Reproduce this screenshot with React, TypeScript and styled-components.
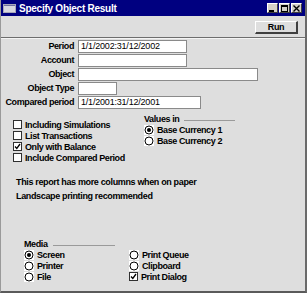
import React from "react";
import styled, { createGlobalStyle } from "styled-components";

const Global = createGlobalStyle`
  html, body { margin: 0; padding: 0; background: #dedede; }
  body { font-family: "Liberation Sans", Arial, sans-serif; }
`;

const Window = styled.div`
  width: 307px;
  height: 293px;
  box-sizing: border-box;
  background: #dedede;
  border-left: 1px solid #9a9a9a;
  border-right: 2px solid #6a6a6a;
  border-bottom: 2px solid #5a5a5a;
  display: flex;
  flex-direction: column;
  font-family: "Liberation Sans", Arial, sans-serif;
  font-weight: bold;
  font-size: 9px;
  letter-spacing: -0.4px;
  color: #000;
  overflow: hidden;
`;

const TitleBar = styled.div`
  height: 16px;
  background: #000080;
  display: flex;
  align-items: center;
  padding: 0 3px 0 2px;
  box-sizing: border-box;
`;

const TitleText = styled.span`
  color: #fff;
  font-size: 10px;
  margin-left: 3px;
  flex: 1;
  letter-spacing: -0.25px;
`;

const TitleButtons = styled.div`
  display: flex;
  gap: 1px;
`;

const TitleButton = styled.div`
  width: 11px;
  height: 10px;
  box-sizing: border-box;
  background: #d4d0c8;
  border-top: 1px solid #fff;
  border-left: 1px solid #fff;
  border-right: 1px solid #404040;
  border-bottom: 1px solid #404040;
  display: flex;
  align-items: center;
  justify-content: center;
`;

const Toolbar = styled.div`
  height: 22px;
  box-sizing: border-box;
  display: flex;
  justify-content: flex-end;
  align-items: flex-start;
  padding: 5px 7px 0 0;
  border-bottom: 1px solid #6e6e6e;
  box-shadow: 0 1px 0 #f4f4f4;
`;

const RunButton = styled.div`
  width: 43px;
  height: 13px;
  box-sizing: border-box;
  background: #dedede;
  border-top: 1px solid #fff;
  border-left: 1px solid #fff;
  border-right: 2px solid #404040;
  border-bottom: 2px solid #404040;
  display: flex;
  align-items: center;
  justify-content: center;
  font-size: 9px;
`;

const Content = styled.div`
  display: flex;
  flex-direction: column;
  padding-top: 2px;
`;

const FieldGrid = styled.div`
  display: grid;
  grid-template-columns: 73px auto;
  column-gap: 4px;
  row-gap: 1px;
  align-items: center;
`;

const Label = styled.div`
  text-align: right;
  line-height: 13px;
  white-space: nowrap;
`;

const Input = styled.div<{ $w: number }>`
  width: ${(p) => p.$w}px;
  height: 13px;
  box-sizing: border-box;
  background: #fff;
  border: 1px solid #8a8a8a;
  font-weight: normal;
  font-size: 9px;
  letter-spacing: -0.2px;
  line-height: 11px;
  padding-left: 2px;
`;

const OptionsRow = styled.div`
  display: flex;
  margin-top: 4px;
`;

const CheckColumn = styled.div`
  display: flex;
  flex-direction: column;
  padding: 6px 0 0 12px;
  width: 131px;
`;

const OptionRow = styled.div`
  height: 11px;
  display: flex;
  align-items: center;
  gap: 3px;
  white-space: nowrap;
`;

const Box = styled.div`
  width: 9px;
  height: 9px;
  box-sizing: border-box;
  background: #fff;
  border: 1px solid #303030;
  display: flex;
  align-items: center;
  justify-content: center;
`;

const RadioWrap = styled.div`
  width: 10px;
  height: 10px;
  background: #fff;
  display: flex;
  align-items: center;
  justify-content: center;
`;

const GroupColumn = styled.div`
  display: flex;
  flex-direction: column;
`;

const GroupHeader = styled.div<{ $line: number }>`
  height: 11px;
  display: flex;
  align-items: center;
  gap: 5px;
  &::after {
    content: "";
    width: ${(p) => p.$line}px;
    height: 1px;
    background: #9a9a9a;
    margin-top: 3px;
  }
`;

const Notes = styled.div`
  margin-top: 12px;
  padding-left: 15px;
  line-height: 14px;
  letter-spacing: -0.35px;
`;

const Media = styled.div`
  margin-top: 35px;
  padding-left: 23px;
  display: flex;
  flex-direction: column;
`;

const MediaGrid = styled.div`
  display: grid;
  grid-template-columns: 105px auto;
  grid-auto-flow: column;
  grid-template-rows: repeat(3, 11px);
`;

const Check = ({ on }: { on?: boolean }) => (
  <Box>
    {on && (
      <svg width="7" height="7" viewBox="0 0 7 7">
        <path d="M1 3.5 L2.8 5.5 L6 1" stroke="#000" strokeWidth="1.3" fill="none" />
      </svg>
    )}
  </Box>
);

const Radio = ({ on }: { on?: boolean }) => (
  <RadioWrap>
    <svg width="10" height="10" viewBox="0 0 10 10">
      <circle cx="5" cy="5" r="4" fill="#fff" stroke="#000" strokeWidth="1" />
      {on && <circle cx="5" cy="5" r="2" fill="#000" />}
    </svg>
  </RadioWrap>
);

export default function App() {
  return (
    <>
      <Global />
      <Window>
        <TitleBar>
          <svg width="13" height="9" viewBox="0 0 13 9">
            <rect x="0" y="0" width="13" height="9" fill="#a8a8b8" />
            <rect x="1" y="2" width="11" height="6" fill="#d8d8e0" />
            <rect x="1" y="1" width="11" height="1" fill="#7070a0" />
          </svg>
          <TitleText>Specify Object Result</TitleText>
          <TitleButtons>
            <TitleButton>
              <svg width="7" height="7" viewBox="0 0 7 7">
                <rect x="0" y="5" width="5" height="2" fill="#000" />
              </svg>
            </TitleButton>
            <TitleButton>
              <svg width="7" height="7" viewBox="0 0 7 7">
                <rect x="0.5" y="0.5" width="6" height="6" fill="none" stroke="#000" />
                <rect x="0" y="0" width="7" height="2" fill="#000" />
              </svg>
            </TitleButton>
            <TitleButton>
              <svg width="7" height="7" viewBox="0 0 7 7">
                <path d="M0.5 0.5 L6.5 6.5 M6.5 0.5 L0.5 6.5" stroke="#000" strokeWidth="1.4" />
              </svg>
            </TitleButton>
          </TitleButtons>
        </TitleBar>
        <Toolbar>
          <RunButton>Run</RunButton>
        </Toolbar>
        <Content>
          <FieldGrid>
            <Label>Period</Label>
            <Input $w={109}>1/1/2002:31/12/2002</Input>
            <Label>Account</Label>
            <Input $w={109} />
            <Label>Object</Label>
            <Input $w={180} />
            <Label>Object Type</Label>
            <Input $w={39} />
            <Label>Compared period</Label>
            <Input $w={123}>1/1/2001:31/12/2001</Input>
          </FieldGrid>
          <OptionsRow>
            <CheckColumn>
              <OptionRow><Check />Including Simulations</OptionRow>
              <OptionRow><Check />List Transactions</OptionRow>
              <OptionRow><Check on />Only with Balance</OptionRow>
              <OptionRow><Check />Include Compared Period</OptionRow>
            </CheckColumn>
            <GroupColumn>
              <GroupHeader $line={51}>Values in</GroupHeader>
              <OptionRow><Radio on />Base Currency 1</OptionRow>
              <OptionRow><Radio />Base Currency 2</OptionRow>
            </GroupColumn>
          </OptionsRow>
          <Notes>
            This report has more columns when on paper
            <br />
            Landscape printing recommended
          </Notes>
          <Media>
            <GroupHeader $line={62}>Media</GroupHeader>
            <MediaGrid>
              <OptionRow><Radio on />Screen</OptionRow>
              <OptionRow><Radio />Printer</OptionRow>
              <OptionRow><Radio />File</OptionRow>
              <OptionRow><Radio />Print Queue</OptionRow>
              <OptionRow><Radio />Clipboard</OptionRow>
              <OptionRow><Check on />Print Dialog</OptionRow>
            </MediaGrid>
          </Media>
        </Content>
      </Window>
    </>
  );
}
